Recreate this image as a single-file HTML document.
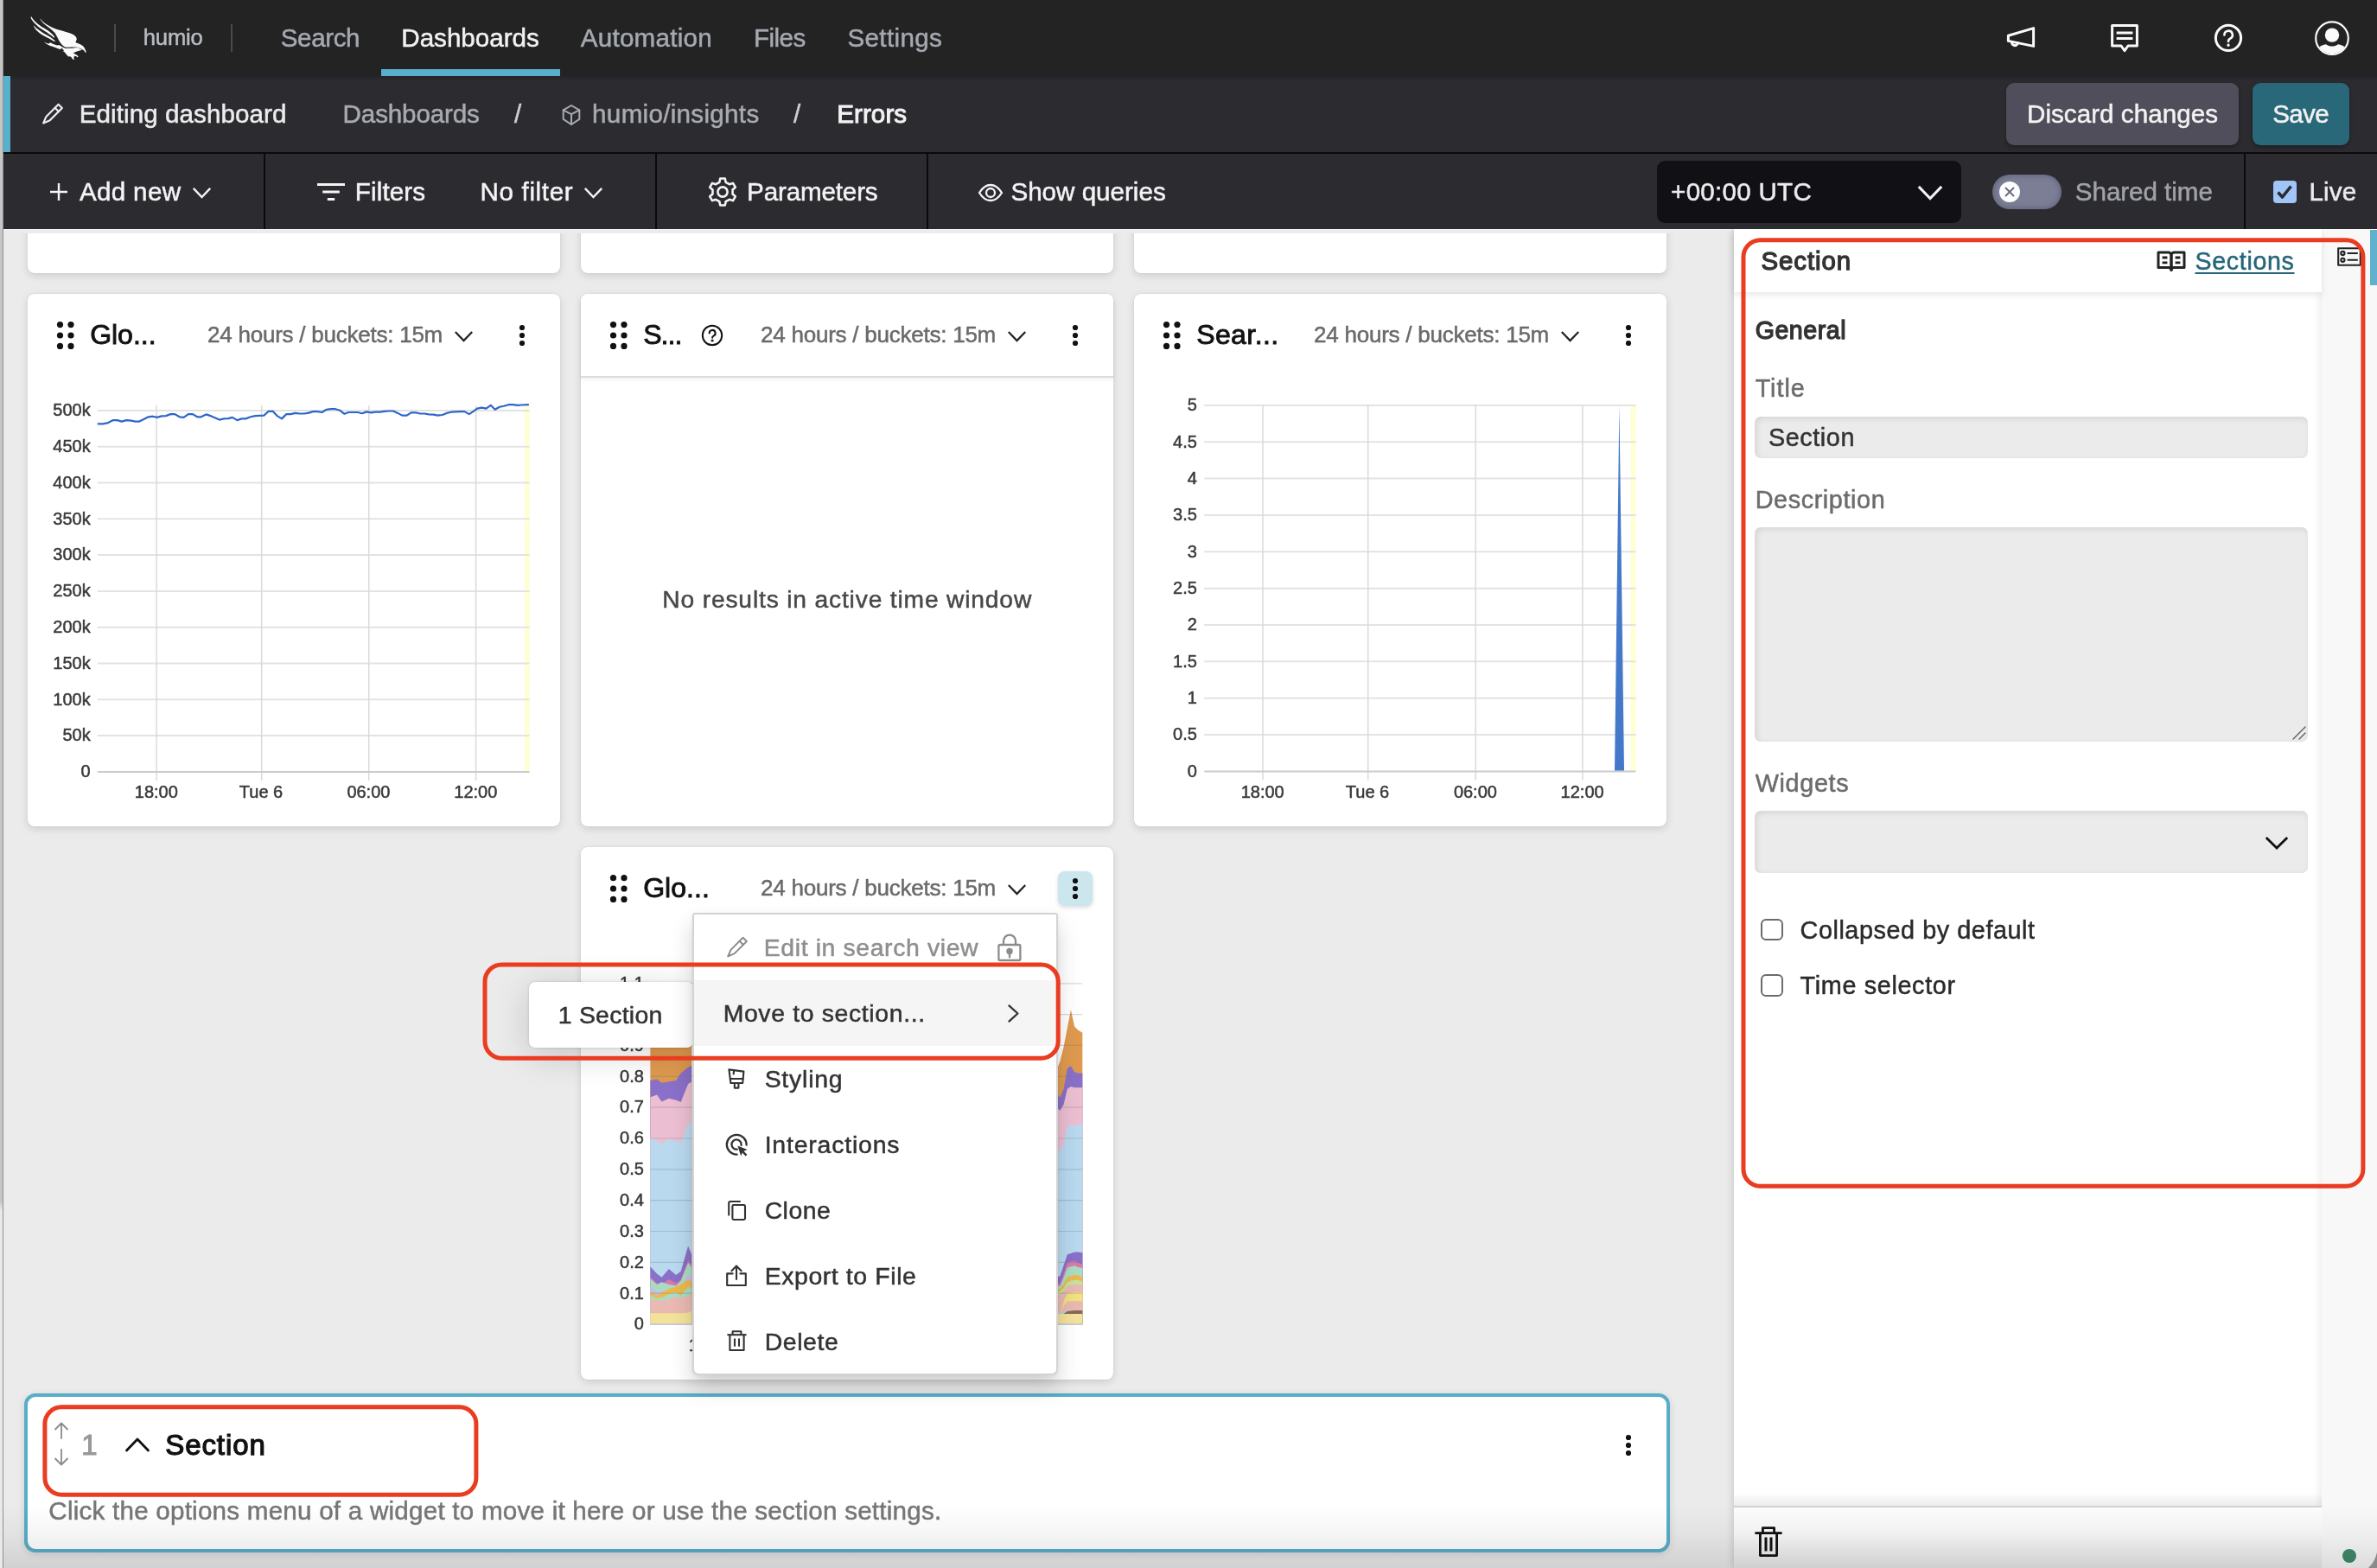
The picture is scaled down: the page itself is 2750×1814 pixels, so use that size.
<!DOCTYPE html>
<html lang="en"><head><meta charset="utf-8"><title>Errors - Editing dashboard</title>
<style>
html,body{margin:0;padding:0;background:#ebebeb;}
body{width:2750px;height:1814px;overflow:hidden;font-family:"Liberation Sans",sans-serif;}
#root{will-change:transform;position:relative;width:2750px;height:1814px;overflow:hidden;background:#ebebeb;}
.b{position:absolute;box-sizing:border-box;}
.t{position:absolute;white-space:nowrap;line-height:1;font-family:"Liberation Sans",sans-serif;}
.card{background:#fff;border-radius:8px;box-shadow:0 3px 10px rgba(0,0,0,.13),0 0 2px rgba(0,0,0,.08);}
svg{overflow:visible;}

</style></head>
<body>
<div id="root">
<div class="b " style="left:4px;top:265px;width:2746px;height:1549px;background:#ebebeb;"></div>
<div class="b card" style="left:32px;top:200px;width:616px;height:116px;"></div>
<div class="b card" style="left:672px;top:200px;width:616px;height:116px;"></div>
<div class="b card" style="left:1312px;top:200px;width:616px;height:116px;"></div>
<div class="b " style="left:4px;top:265px;width:2002px;height:5px;background:linear-gradient(#f3f3f3 0,#ebebeb 2px);"></div>
<div class="b card" style="left:32px;top:340px;width:616px;height:616px;"></div>
<svg class="b" style="left:65.4px;top:371.9px;" width="21" height="32" viewBox="0 0 21 32"><g fill="#111"><circle cx="4.5" cy="3.6" r="3.6"/><circle cx="4.5" cy="16.0" r="3.6"/><circle cx="4.5" cy="28.400000000000002" r="3.6"/><circle cx="17.0" cy="3.6" r="3.6"/><circle cx="17.0" cy="16.0" r="3.6"/><circle cx="17.0" cy="28.400000000000002" r="3.6"/></g></svg>
<span class="t" style="left:104.14px;top:371.31px;font-size:32px;color:#111;letter-spacing:-0.010px;-webkit-text-stroke:0.9px #111;">Glo...</span>
<span class="t" style="left:240.12px;top:374.29px;font-size:26px;color:#6a6a6a;letter-spacing:-0.242px;-webkit-text-stroke:0.5px #6a6a6a;">24 hours / buckets: 15m</span>
<svg class="b" style="left:525.7px;top:382.75px;" width="21" height="12.5" viewBox="0 0 21 12.5"><path d="M0.8 0.9 L10.5 11.1 L20.2 0.9" fill="none" stroke="#222" stroke-width="2.2" stroke-linecap="butt" stroke-linejoin="miter"/></svg>
<svg class="b" style="left:599.8px;top:375.1px;" width="8" height="28" viewBox="0 0 8 28"><g fill="#111"><circle cx="4" cy="4.0" r="3.1"/><circle cx="4" cy="13.0" r="3.1"/><circle cx="4" cy="22.0" r="3.1"/></g></svg>
<svg class="b" style="left:0px;top:0px;pointer-events:none;" width="2750" height="1814" viewBox="0 0 2750 1814"><rect x="606.6" y="468.9" width="6" height="424.0" fill="#ffffd6"/><line x1="112.8" x2="612.5" y1="851.1" y2="851.1" stroke="#e3e3e3" stroke-width="2"/><line x1="112.8" x2="612.5" y1="809.3" y2="809.3" stroke="#e3e3e3" stroke-width="2"/><line x1="112.8" x2="612.5" y1="767.5" y2="767.5" stroke="#e3e3e3" stroke-width="2"/><line x1="112.8" x2="612.5" y1="725.7" y2="725.7" stroke="#e3e3e3" stroke-width="2"/><line x1="112.8" x2="612.5" y1="683.9" y2="683.9" stroke="#e3e3e3" stroke-width="2"/><line x1="112.8" x2="612.5" y1="642.1" y2="642.1" stroke="#e3e3e3" stroke-width="2"/><line x1="112.8" x2="612.5" y1="600.3" y2="600.3" stroke="#e3e3e3" stroke-width="2"/><line x1="112.8" x2="612.5" y1="558.5" y2="558.5" stroke="#e3e3e3" stroke-width="2"/><line x1="112.8" x2="612.5" y1="516.7" y2="516.7" stroke="#e3e3e3" stroke-width="2"/><line x1="112.8" x2="612.5" y1="474.9" y2="474.9" stroke="#e3e3e3" stroke-width="2"/><line x1="181.1" x2="181.1" y1="468.9" y2="902.9" stroke="#dadada" stroke-width="1.5"/><line x1="302.7" x2="302.7" y1="468.9" y2="902.9" stroke="#dadada" stroke-width="1.5"/><line x1="426.7" x2="426.7" y1="468.9" y2="902.9" stroke="#dadada" stroke-width="1.5"/><line x1="550.6" x2="550.6" y1="468.9" y2="902.9" stroke="#dadada" stroke-width="1.5"/><line x1="112.8" x2="612.5" y1="892.9" y2="892.9" stroke="#cbcbcb" stroke-width="2"/><polyline points="112.8,490.3 119.3,490.3 125.1,489.1 131.0,486.1 135.5,486.1 140.8,487.6 146.3,486.1 151.6,486.7 156.7,487.6 161.1,487.6 166.4,485.0 171.7,482.3 176.7,481.7 181.7,482.9 187.0,481.4 192.0,481.1 197.3,479.1 202.3,479.1 207.6,482.3 212.6,482.9 217.9,479.1 222.9,479.1 228.2,482.3 232.6,482.3 238.5,479.4 244.4,481.4 253.8,485.6 259.1,484.4 264.1,484.1 268.8,482.9 274.4,486.1 279.7,484.4 284.2,484.4 290.0,482.3 295.3,481.1 305.4,480.6 310.7,475.8 315.7,475.8 321.0,481.4 326.0,484.4 331.3,479.1 336.3,479.1 341.6,477.9 346.6,478.5 351.9,478.5 357.2,477.6 362.2,476.1 367.5,476.1 372.5,477.0 377.8,473.8 382.8,473.2 388.1,473.2 393.1,474.7 398.4,478.8 403.4,477.0 408.7,477.0 413.7,477.0 419.0,478.2 424.0,476.4 429.3,477.3 434.3,476.7 439.6,476.7 444.6,475.8 449.9,475.5 454.9,475.5 460.2,477.9 465.3,480.6 470.6,480.6 475.6,477.3 480.9,477.3 485.9,478.5 491.2,478.5 496.2,479.4 501.5,479.7 506.5,480.6 511.8,480.0 516.8,477.9 522.1,476.7 527.1,476.4 532.4,476.1 537.4,476.1 542.7,479.1 547.7,475.8 552.1,472.6 557.4,471.7 562.4,472.6 567.7,468.8 572.7,473.8 578.0,470.8 583.0,469.7 588.3,468.2 593.3,468.2 598.6,468.8 603.7,468.5 611.9,468.2" fill="none" stroke="#2c66c8" stroke-width="2.2" stroke-linejoin="round"/></svg>
<span class="t" style="left:93.58px;top:882.23px;font-size:20px;color:#3a3a3a;-webkit-text-stroke:0.5px #3a3a3a;">0</span>
<span class="t" style="left:72.46px;top:840.43px;font-size:20px;color:#3a3a3a;-webkit-text-stroke:0.5px #3a3a3a;">50k</span>
<span class="t" style="left:61.34px;top:798.63px;font-size:20px;color:#3a3a3a;-webkit-text-stroke:0.5px #3a3a3a;">100k</span>
<span class="t" style="left:61.34px;top:756.83px;font-size:20px;color:#3a3a3a;-webkit-text-stroke:0.5px #3a3a3a;">150k</span>
<span class="t" style="left:61.34px;top:715.03px;font-size:20px;color:#3a3a3a;-webkit-text-stroke:0.5px #3a3a3a;">200k</span>
<span class="t" style="left:61.34px;top:673.23px;font-size:20px;color:#3a3a3a;-webkit-text-stroke:0.5px #3a3a3a;">250k</span>
<span class="t" style="left:61.34px;top:631.43px;font-size:20px;color:#3a3a3a;-webkit-text-stroke:0.5px #3a3a3a;">300k</span>
<span class="t" style="left:61.34px;top:589.63px;font-size:20px;color:#3a3a3a;-webkit-text-stroke:0.5px #3a3a3a;">350k</span>
<span class="t" style="left:61.34px;top:547.83px;font-size:20px;color:#3a3a3a;-webkit-text-stroke:0.5px #3a3a3a;">400k</span>
<span class="t" style="left:61.34px;top:506.03px;font-size:20px;color:#3a3a3a;-webkit-text-stroke:0.5px #3a3a3a;">450k</span>
<span class="t" style="left:61.34px;top:464.23px;font-size:20px;color:#3a3a3a;-webkit-text-stroke:0.5px #3a3a3a;">500k</span>
<span class="t" style="left:155.78px;top:906.37px;font-size:20px;color:#3a3a3a;-webkit-text-stroke:0.5px #3a3a3a;">18:00</span>
<span class="t" style="left:276.83px;top:906.37px;font-size:20px;color:#3a3a3a;-webkit-text-stroke:0.5px #3a3a3a;">Tue 6</span>
<span class="t" style="left:401.38px;top:906.37px;font-size:20px;color:#3a3a3a;-webkit-text-stroke:0.5px #3a3a3a;">06:00</span>
<span class="t" style="left:525.28px;top:906.37px;font-size:20px;color:#3a3a3a;-webkit-text-stroke:0.5px #3a3a3a;">12:00</span>
<div class="b card" style="left:672px;top:340px;width:616px;height:616px;"></div>
<div class="b " style="left:672px;top:340px;width:616px;height:97px;background:#fff;border-radius:8px 8px 0 0;border-bottom:2px solid #dcdcdc;box-shadow:0 2px 4px rgba(0,0,0,.06);"></div>
<svg class="b" style="left:705.4px;top:371.9px;" width="21" height="32" viewBox="0 0 21 32"><g fill="#111"><circle cx="4.5" cy="3.6" r="3.6"/><circle cx="4.5" cy="16.0" r="3.6"/><circle cx="4.5" cy="28.400000000000002" r="3.6"/><circle cx="17.0" cy="3.6" r="3.6"/><circle cx="17.0" cy="16.0" r="3.6"/><circle cx="17.0" cy="28.400000000000002" r="3.6"/></g></svg>
<span class="t" style="left:744.14px;top:371.31px;font-size:32px;color:#111;letter-spacing:-0.932px;-webkit-text-stroke:0.9px #111;">S...</span>
<svg class="b" style="left:811px;top:375.1px;" width="26" height="26" viewBox="0 0 26 26"><g fill="none" stroke="#111" stroke-width="2" stroke-linecap="round" stroke-linejoin="round" ><circle cx="13" cy="13" r="11.2"/><path d="M9.6 10.4 a3.5 3.5 0 1 1 4.9 3.2 c-1 .5 -1.4 1 -1.4 2.2"/><circle cx="13.1" cy="19" r="0.6" fill="#111"/></g></svg>
<span class="t" style="left:880.12px;top:374.29px;font-size:26px;color:#6a6a6a;letter-spacing:-0.242px;-webkit-text-stroke:0.5px #6a6a6a;">24 hours / buckets: 15m</span>
<svg class="b" style="left:1165.7px;top:382.75px;" width="21" height="12.5" viewBox="0 0 21 12.5"><path d="M0.8 0.9 L10.5 11.1 L20.2 0.9" fill="none" stroke="#222" stroke-width="2.2" stroke-linecap="butt" stroke-linejoin="miter"/></svg>
<svg class="b" style="left:1239.8px;top:375.1px;" width="8" height="28" viewBox="0 0 8 28"><g fill="#111"><circle cx="4" cy="4.0" r="3.1"/><circle cx="4" cy="13.0" r="3.1"/><circle cx="4" cy="22.0" r="3.1"/></g></svg>
<span class="t" style="left:766.35px;top:678.93px;font-size:28.2px;color:#484848;letter-spacing:0.834px;-webkit-text-stroke:0.5px #484848;">No results in active time window</span>
<div class="b card" style="left:1312px;top:340px;width:616px;height:616px;"></div>
<svg class="b" style="left:1345.4px;top:371.9px;" width="21" height="32" viewBox="0 0 21 32"><g fill="#111"><circle cx="4.5" cy="3.6" r="3.6"/><circle cx="4.5" cy="16.0" r="3.6"/><circle cx="4.5" cy="28.400000000000002" r="3.6"/><circle cx="17.0" cy="3.6" r="3.6"/><circle cx="17.0" cy="16.0" r="3.6"/><circle cx="17.0" cy="28.400000000000002" r="3.6"/></g></svg>
<span class="t" style="left:1384.14px;top:371.31px;font-size:32px;color:#111;letter-spacing:0.420px;-webkit-text-stroke:0.9px #111;">Sear...</span>
<span class="t" style="left:1520.12px;top:374.29px;font-size:26px;color:#6a6a6a;letter-spacing:-0.242px;-webkit-text-stroke:0.5px #6a6a6a;">24 hours / buckets: 15m</span>
<svg class="b" style="left:1805.7px;top:382.75px;" width="21" height="12.5" viewBox="0 0 21 12.5"><path d="M0.8 0.9 L10.5 11.1 L20.2 0.9" fill="none" stroke="#222" stroke-width="2.2" stroke-linecap="butt" stroke-linejoin="miter"/></svg>
<svg class="b" style="left:1879.8px;top:375.1px;" width="8" height="28" viewBox="0 0 8 28"><g fill="#111"><circle cx="4" cy="4.0" r="3.1"/><circle cx="4" cy="13.0" r="3.1"/><circle cx="4" cy="22.0" r="3.1"/></g></svg>
<svg class="b" style="left:0px;top:0px;pointer-events:none;" width="2750" height="1814" viewBox="0 0 2750 1814"><rect x="1886.6" y="468.9" width="6" height="423.5" fill="#ffffd6"/><line x1="1393.3" x2="1892.5" y1="850.05" y2="850.05" stroke="#e3e3e3" stroke-width="2"/><line x1="1393.3" x2="1892.5" y1="807.6999999999999" y2="807.6999999999999" stroke="#e3e3e3" stroke-width="2"/><line x1="1393.3" x2="1892.5" y1="765.3499999999999" y2="765.3499999999999" stroke="#e3e3e3" stroke-width="2"/><line x1="1393.3" x2="1892.5" y1="723.0" y2="723.0" stroke="#e3e3e3" stroke-width="2"/><line x1="1393.3" x2="1892.5" y1="680.65" y2="680.65" stroke="#e3e3e3" stroke-width="2"/><line x1="1393.3" x2="1892.5" y1="638.3" y2="638.3" stroke="#e3e3e3" stroke-width="2"/><line x1="1393.3" x2="1892.5" y1="595.95" y2="595.95" stroke="#e3e3e3" stroke-width="2"/><line x1="1393.3" x2="1892.5" y1="553.5999999999999" y2="553.5999999999999" stroke="#e3e3e3" stroke-width="2"/><line x1="1393.3" x2="1892.5" y1="511.24999999999994" y2="511.24999999999994" stroke="#e3e3e3" stroke-width="2"/><line x1="1393.3" x2="1892.5" y1="468.9" y2="468.9" stroke="#e3e3e3" stroke-width="2"/><line x1="1461" x2="1461" y1="468.9" y2="902.4" stroke="#dadada" stroke-width="1.5"/><line x1="1582.7" x2="1582.7" y1="468.9" y2="902.4" stroke="#dadada" stroke-width="1.5"/><line x1="1707.2" x2="1707.2" y1="468.9" y2="902.4" stroke="#dadada" stroke-width="1.5"/><line x1="1830.9" x2="1830.9" y1="468.9" y2="902.4" stroke="#dadada" stroke-width="1.5"/><line x1="1393.3" x2="1892.5" y1="892.4" y2="892.4" stroke="#cbcbcb" stroke-width="2"/><polygon points="1873.4,468.9 1879,891.4 1868,891.4" fill="#4479c9"/></svg>
<span class="t" style="left:1373.78px;top:881.73px;font-size:20px;color:#3a3a3a;-webkit-text-stroke:0.5px #3a3a3a;">0</span>
<span class="t" style="left:1357.10px;top:839.38px;font-size:20px;color:#3a3a3a;-webkit-text-stroke:0.5px #3a3a3a;">0.5</span>
<span class="t" style="left:1373.78px;top:797.03px;font-size:20px;color:#3a3a3a;-webkit-text-stroke:0.5px #3a3a3a;">1</span>
<span class="t" style="left:1357.10px;top:754.68px;font-size:20px;color:#3a3a3a;-webkit-text-stroke:0.5px #3a3a3a;">1.5</span>
<span class="t" style="left:1373.78px;top:712.33px;font-size:20px;color:#3a3a3a;-webkit-text-stroke:0.5px #3a3a3a;">2</span>
<span class="t" style="left:1357.10px;top:669.98px;font-size:20px;color:#3a3a3a;-webkit-text-stroke:0.5px #3a3a3a;">2.5</span>
<span class="t" style="left:1373.78px;top:627.63px;font-size:20px;color:#3a3a3a;-webkit-text-stroke:0.5px #3a3a3a;">3</span>
<span class="t" style="left:1357.10px;top:585.28px;font-size:20px;color:#3a3a3a;-webkit-text-stroke:0.5px #3a3a3a;">3.5</span>
<span class="t" style="left:1373.78px;top:542.93px;font-size:20px;color:#3a3a3a;-webkit-text-stroke:0.5px #3a3a3a;">4</span>
<span class="t" style="left:1357.10px;top:500.58px;font-size:20px;color:#3a3a3a;-webkit-text-stroke:0.5px #3a3a3a;">4.5</span>
<span class="t" style="left:1373.78px;top:458.23px;font-size:20px;color:#3a3a3a;-webkit-text-stroke:0.5px #3a3a3a;">5</span>
<span class="t" style="left:1435.68px;top:906.37px;font-size:20px;color:#3a3a3a;-webkit-text-stroke:0.5px #3a3a3a;">18:00</span>
<span class="t" style="left:1556.83px;top:906.37px;font-size:20px;color:#3a3a3a;-webkit-text-stroke:0.5px #3a3a3a;">Tue 6</span>
<span class="t" style="left:1681.88px;top:906.37px;font-size:20px;color:#3a3a3a;-webkit-text-stroke:0.5px #3a3a3a;">06:00</span>
<span class="t" style="left:1805.58px;top:906.37px;font-size:20px;color:#3a3a3a;-webkit-text-stroke:0.5px #3a3a3a;">12:00</span>
<div class="b card" style="left:672px;top:980px;width:616px;height:616px;"></div>
<svg class="b" style="left:705.4px;top:1011.9px;" width="21" height="32" viewBox="0 0 21 32"><g fill="#111"><circle cx="4.5" cy="3.6" r="3.6"/><circle cx="4.5" cy="16.0" r="3.6"/><circle cx="4.5" cy="28.400000000000002" r="3.6"/><circle cx="17.0" cy="3.6" r="3.6"/><circle cx="17.0" cy="16.0" r="3.6"/><circle cx="17.0" cy="28.400000000000002" r="3.6"/></g></svg>
<span class="t" style="left:744.14px;top:1011.31px;font-size:32px;color:#111;letter-spacing:0.050px;-webkit-text-stroke:0.9px #111;">Glo...</span>
<span class="t" style="left:880.12px;top:1014.29px;font-size:26px;color:#6a6a6a;letter-spacing:-0.242px;-webkit-text-stroke:0.5px #6a6a6a;">24 hours / buckets: 15m</span>
<svg class="b" style="left:1165.7px;top:1022.75px;" width="21" height="12.5" viewBox="0 0 21 12.5"><path d="M0.8 0.9 L10.5 11.1 L20.2 0.9" fill="none" stroke="#222" stroke-width="2.2" stroke-linecap="butt" stroke-linejoin="miter"/></svg>
<div class="b " style="left:1224px;top:1008px;width:40px;height:40px;background:#cbe6ed;border-radius:7.5px;box-shadow:0 2px 5px rgba(0,0,0,.14);"></div>
<svg class="b" style="left:1239.8px;top:1015.0999999999999px;" width="8" height="28" viewBox="0 0 8 28"><g fill="#111"><circle cx="4" cy="4.0" r="3.1"/><circle cx="4" cy="13.0" r="3.1"/><circle cx="4" cy="22.0" r="3.1"/></g></svg>
<svg class="b" style="left:0px;top:0px;pointer-events:none;" width="2750" height="1814" viewBox="0 0 2750 1814"><defs><clipPath id="c4"><rect x="752.2" y="1137" width="500.2" height="395.6"/></clipPath></defs><g clip-path="url(#c4)"><polygon points="752.2,1144.5 760.0,1144.5 765.5,1144.5 773.8,1144.5 782.2,1144.5 787.7,1144.5 796.1,1144.5 800.2,1144.5 800.2,1532.4 752.2,1532.4" fill="#df9a4f"/><polygon points="752.2,1250.0 760.0,1248.6 765.5,1252.8 773.8,1251.4 782.2,1250.0 787.7,1241.6 796.1,1234.7 800.2,1232.8 800.2,1532.4 752.2,1532.4" fill="#8a70c9"/><polygon points="752.2,1269.4 760.0,1266.6 765.5,1274.4 773.8,1270.8 782.2,1272.7 787.7,1275.0 796.1,1254.1 800.2,1251.4 800.2,1532.4 752.2,1532.4" fill="#ebbfd1"/><polygon points="752.2,1316.6 760.0,1319.4 765.5,1323.6 773.8,1318.0 782.2,1320.0 787.7,1322.2 796.1,1300.5 800.2,1297.2 800.2,1532.4 752.2,1532.4" fill="#b9d9ef"/><polygon points="752.2,1465.2 760.0,1473.5 765.5,1477.7 773.8,1467.9 782.2,1474.9 787.7,1470.7 796.1,1441.6 800.2,1451.3 800.2,1532.4 752.2,1532.4" fill="#8a70c9"/><polygon points="752.2,1477.7 760.0,1484.6 765.5,1486.0 773.8,1479.9 782.2,1484.6 787.7,1480.4 796.1,1458.2 800.2,1463.8 800.2,1532.4 752.2,1532.4" fill="#d87aa9"/><polygon points="752.2,1479.1 760.0,1486.0 765.5,1483.2 773.8,1486.0 782.2,1487.4 787.7,1481.8 796.1,1461.0 800.2,1466.6 800.2,1532.4 752.2,1532.4" fill="#a9dcc2"/><polygon points="752.2,1488.8 760.0,1494.3 765.5,1494.3 773.8,1491.5 782.2,1491.5 787.7,1488.8 796.1,1474.9 800.2,1477.7 800.2,1532.4 752.2,1532.4" fill="#c9b9e9"/><polygon points="752.2,1494.9 760.0,1498.5 765.5,1495.7 773.8,1491.0 782.2,1488.8 787.7,1486.0 796.1,1480.4 800.2,1483.2 800.2,1532.4 752.2,1532.4" fill="#edb94c"/><polygon points="752.2,1498.5 760.0,1502.1 765.5,1501.3 773.8,1497.1 782.2,1494.9 787.7,1498.5 796.1,1488.8 800.2,1490.2 800.2,1532.4 752.2,1532.4" fill="#a9dcc2"/><polygon points="752.2,1503.2 760.0,1504.0 765.5,1504.9 773.8,1503.2 782.2,1499.9 787.7,1502.1 796.1,1498.5 800.2,1497.7 800.2,1532.4 752.2,1532.4" fill="#eab9b1"/><polygon points="752.2,1519.3 760.0,1519.3 765.5,1519.3 773.8,1519.3 782.2,1519.3 787.7,1519.3 796.1,1518.8 800.2,1516.5 800.2,1532.4 752.2,1532.4" fill="#f4e29b"/><polygon points="1220.9,1241.6 1226.4,1227.8 1230.6,1211.1 1234.8,1188.9 1238.9,1168.3 1243.1,1187.5 1247.3,1191.7 1252.8,1195.0 1252.8,1532.4 1220.9,1532.4" fill="#df9a4f"/><polygon points="1220.9,1263.9 1226.4,1269.4 1230.6,1259.7 1234.8,1236.1 1238.9,1233.3 1243.1,1240.3 1247.3,1241.6 1252.8,1241.6 1252.8,1532.4 1220.9,1532.4" fill="#8a70c9"/><polygon points="1220.9,1280.5 1226.4,1284.7 1230.6,1277.7 1234.8,1259.7 1238.9,1256.9 1243.1,1258.3 1247.3,1258.3 1252.8,1258.3 1252.8,1532.4 1220.9,1532.4" fill="#ebbfd1"/><polygon points="1220.9,1327.7 1226.4,1331.9 1230.6,1322.2 1234.8,1304.1 1238.9,1300.5 1243.1,1303.3 1247.3,1301.3 1252.8,1300.5 1252.8,1532.4 1220.9,1532.4" fill="#b9d9ef"/><polygon points="1220.9,1477.7 1226.4,1476.3 1230.6,1463.8 1234.8,1451.3 1238.9,1449.9 1243.1,1448.5 1247.3,1448.5 1252.8,1449.3 1252.8,1532.4 1220.9,1532.4" fill="#8a70c9"/><polygon points="1220.9,1486.0 1226.4,1484.6 1230.6,1473.5 1234.8,1461.0 1238.9,1459.6 1243.1,1458.8 1247.3,1461.0 1252.8,1462.4 1252.8,1532.4 1220.9,1532.4" fill="#d87aa9"/><polygon points="1220.9,1488.8 1226.4,1487.4 1230.6,1477.7 1234.8,1466.6 1238.9,1465.2 1243.1,1464.3 1247.3,1466.0 1252.8,1467.1 1252.8,1532.4 1220.9,1532.4" fill="#a9dcc2"/><polygon points="1220.9,1491.5 1226.4,1491.0 1230.6,1486.0 1234.8,1477.7 1238.9,1476.3 1243.1,1474.9 1247.3,1475.4 1252.8,1477.7 1252.8,1532.4 1220.9,1532.4" fill="#edb94c"/><polygon points="1220.9,1494.9 1226.4,1493.8 1230.6,1490.2 1234.8,1483.2 1238.9,1481.8 1243.1,1481.0 1247.3,1481.0 1252.8,1482.7 1252.8,1532.4 1220.9,1532.4" fill="#c5e2a0"/><polygon points="1220.9,1498.5 1226.4,1497.1 1230.6,1494.3 1234.8,1487.4 1238.9,1486.5 1243.1,1486.0 1247.3,1486.0 1252.8,1486.5 1252.8,1532.4 1220.9,1532.4" fill="#eab9b1"/><polygon points="1220.9,1522.1 1226.4,1522.1 1230.6,1505.4 1234.8,1496.5 1238.9,1495.4 1243.1,1494.9 1247.3,1494.9 1252.8,1494.9 1252.8,1532.4 1220.9,1532.4" fill="#f1e17f"/><polygon points="1220.9,1522.1 1226.4,1522.1 1230.6,1511.0 1234.8,1505.4 1238.9,1505.4 1243.1,1504.9 1247.3,1504.9 1252.8,1505.4 1252.8,1532.4 1220.9,1532.4" fill="#eab9b1"/><polygon points="1220.9,1519.3 1226.4,1519.3 1230.6,1517.9 1234.8,1516.5 1238.9,1516.5 1243.1,1516.5 1247.3,1516.5 1252.8,1516.5 1252.8,1532.4 1220.9,1532.4" fill="#a8dcd0"/><polygon points="1220.9,1522.1 1226.4,1522.1 1230.6,1519.9 1234.8,1517.1 1238.9,1516.5 1243.1,1516.0 1247.3,1516.0 1252.8,1516.0 1252.8,1532.4 1220.9,1532.4" fill="#86695a"/><polygon points="1220.9,1519.9 1226.4,1519.9 1230.6,1519.9 1234.8,1519.9 1238.9,1519.9 1243.1,1519.9 1247.3,1519.9 1252.8,1519.9 1252.8,1532.4 1220.9,1532.4" fill="#f4e29b"/><line x1="752.2" x2="1252.4" y1="1532.1" y2="1532.1" stroke="rgba(120,120,120,.28)" stroke-width="1.2"/><line x1="752.2" x2="1252.4" y1="1496.2" y2="1496.2" stroke="rgba(120,120,120,.28)" stroke-width="1.2"/><line x1="752.2" x2="1252.4" y1="1460.4" y2="1460.4" stroke="rgba(120,120,120,.28)" stroke-width="1.2"/><line x1="752.2" x2="1252.4" y1="1424.5" y2="1424.5" stroke="rgba(120,120,120,.28)" stroke-width="1.2"/><line x1="752.2" x2="1252.4" y1="1388.7" y2="1388.7" stroke="rgba(120,120,120,.28)" stroke-width="1.2"/><line x1="752.2" x2="1252.4" y1="1352.8" y2="1352.8" stroke="rgba(120,120,120,.28)" stroke-width="1.2"/><line x1="752.2" x2="1252.4" y1="1317.0" y2="1317.0" stroke="rgba(120,120,120,.28)" stroke-width="1.2"/><line x1="752.2" x2="1252.4" y1="1281.1" y2="1281.1" stroke="rgba(120,120,120,.28)" stroke-width="1.2"/><line x1="752.2" x2="1252.4" y1="1245.3" y2="1245.3" stroke="rgba(120,120,120,.28)" stroke-width="1.2"/><line x1="752.2" x2="1252.4" y1="1209.4" y2="1209.4" stroke="rgba(120,120,120,.28)" stroke-width="1.2"/><line x1="752.2" x2="1252.4" y1="1173.6" y2="1173.6" stroke="rgba(120,120,120,.28)" stroke-width="1.2"/><line x1="752.2" x2="1252.4" y1="1137.8" y2="1137.8" stroke="rgba(120,120,120,.28)" stroke-width="1.2"/></g><line x1="752.2" x2="1252.4" y1="1532.1" y2="1532.1" stroke="#cbcbcb" stroke-width="2"/></svg>
<span class="t" style="left:796.78px;top:1546.07px;font-size:20px;color:#3a3a3a;-webkit-text-stroke:0.5px #3a3a3a;">18:00</span>
<span class="t" style="left:917.83px;top:1546.07px;font-size:20px;color:#3a3a3a;-webkit-text-stroke:0.5px #3a3a3a;">Tue 6</span>
<span class="t" style="left:1042.38px;top:1546.07px;font-size:20px;color:#3a3a3a;-webkit-text-stroke:0.5px #3a3a3a;">06:00</span>
<span class="t" style="left:1166.28px;top:1546.07px;font-size:20px;color:#3a3a3a;-webkit-text-stroke:0.5px #3a3a3a;">12:00</span>
<span class="t" style="left:733.78px;top:1521.43px;font-size:20px;color:#3a3a3a;-webkit-text-stroke:0.5px #3a3a3a;">0</span>
<span class="t" style="left:717.10px;top:1485.58px;font-size:20px;color:#3a3a3a;-webkit-text-stroke:0.5px #3a3a3a;">0.1</span>
<span class="t" style="left:717.10px;top:1449.73px;font-size:20px;color:#3a3a3a;-webkit-text-stroke:0.5px #3a3a3a;">0.2</span>
<span class="t" style="left:717.10px;top:1413.88px;font-size:20px;color:#3a3a3a;-webkit-text-stroke:0.5px #3a3a3a;">0.3</span>
<span class="t" style="left:717.10px;top:1378.03px;font-size:20px;color:#3a3a3a;-webkit-text-stroke:0.5px #3a3a3a;">0.4</span>
<span class="t" style="left:717.10px;top:1342.18px;font-size:20px;color:#3a3a3a;-webkit-text-stroke:0.5px #3a3a3a;">0.5</span>
<span class="t" style="left:717.10px;top:1306.33px;font-size:20px;color:#3a3a3a;-webkit-text-stroke:0.5px #3a3a3a;">0.6</span>
<span class="t" style="left:717.10px;top:1270.48px;font-size:20px;color:#3a3a3a;-webkit-text-stroke:0.5px #3a3a3a;">0.7</span>
<span class="t" style="left:717.10px;top:1234.63px;font-size:20px;color:#3a3a3a;-webkit-text-stroke:0.5px #3a3a3a;">0.8</span>
<span class="t" style="left:717.10px;top:1198.78px;font-size:20px;color:#3a3a3a;-webkit-text-stroke:0.5px #3a3a3a;">0.9</span>
<span class="t" style="left:733.78px;top:1162.93px;font-size:20px;color:#3a3a3a;-webkit-text-stroke:0.5px #3a3a3a;">1</span>
<span class="t" style="left:717.10px;top:1127.08px;font-size:20px;color:#3a3a3a;-webkit-text-stroke:0.5px #3a3a3a;">1.1</span>
<div class="b " style="left:28px;top:1612px;width:1904px;height:184px;background:#fff;border:4px solid #58adc8;border-radius:13px;box-shadow:0 2px 8px rgba(0,0,0,.12);"></div>
<svg class="b" style="left:62px;top:1645px;" width="18" height="20" viewBox="0 0 18 20"><g fill="none" stroke="#8a8a8a" stroke-width="1.8" stroke-linecap="round" stroke-linejoin="round" ><path d="M9 19 V2 M2 8.5 L9 1.5 L16 8.5"/></g></svg>
<svg class="b" style="left:62px;top:1676px;" width="18" height="20" viewBox="0 0 18 20"><g fill="none" stroke="#8a8a8a" stroke-width="1.8" stroke-linecap="round" stroke-linejoin="round" ><path d="M9 1 V18 M2 11.5 L9 18.5 L16 11.5"/></g></svg>
<span class="t" style="left:94.20px;top:1654.67px;font-size:33px;color:#999;-webkit-text-stroke:1.1px #999;">1</span>
<svg class="b" style="left:145px;top:1663px;" width="28" height="17" viewBox="0 0 28 17"><g fill="none" stroke="#111" stroke-width="2.8" stroke-linecap="round" stroke-linejoin="round" ><path d="M1.5 15 L14 2 L26.5 15"/></g></svg>
<span class="t" style="left:191.31px;top:1655.07px;font-size:33.0px;color:#111;letter-spacing:0.900px;-webkit-text-stroke:1.25px #111;">Section</span>
<span class="t" style="left:56.31px;top:1733.14px;font-size:29.6px;color:#777;letter-spacing:0.230px;-webkit-text-stroke:0.5px #777;">Click the options menu of a widget to move it here or use the section settings.</span>
<svg class="b" style="left:1880px;top:1658.6px;" width="8" height="28" viewBox="0 0 8 28"><g fill="#111"><circle cx="4" cy="4.0" r="3.1"/><circle cx="4" cy="13.0" r="3.1"/><circle cx="4" cy="22.0" r="3.1"/></g></svg>
<div class="b " style="left:612px;top:1135.5px;width:190px;height:76.5px;background:#fff;border-radius:7px;box-shadow:0 8px 40px rgba(0,0,0,.17),0 0 3px rgba(0,0,0,.18);"></div>
<span class="t" style="left:645.65px;top:1159.76px;font-size:28.4px;color:#333;letter-spacing:0.279px;-webkit-text-stroke:0.5px #333;">1 Section</span>
<div class="b " style="left:801px;top:1056px;width:423px;height:534.5px;background:#fff;border-radius:3px 3px 7px 7px;border:2px solid #d3d3d3;box-shadow:0 14px 26px rgba(0,0,0,.17),0 2px 5px rgba(0,0,0,.06);"></div>
<div class="b " style="left:803px;top:1134px;width:419px;height:76px;background:#f5f5f5;"></div>
<span class="t" style="left:883.75px;top:1081.66px;font-size:28.4px;color:#8f8f8f;letter-spacing:0.617px;-webkit-text-stroke:0.5px #8f8f8f;">Edit in search view</span>
<span class="t" style="left:836.65px;top:1157.96px;font-size:28.4px;color:#333;letter-spacing:0.647px;-webkit-text-stroke:0.5px #333;">Move to section...</span>
<span class="t" style="left:884.65px;top:1233.96px;font-size:28.4px;color:#333;letter-spacing:0.798px;-webkit-text-stroke:0.5px #333;">Styling</span>
<span class="t" style="left:884.65px;top:1309.96px;font-size:28.4px;color:#333;letter-spacing:0.822px;-webkit-text-stroke:0.5px #333;">Interactions</span>
<span class="t" style="left:884.65px;top:1385.96px;font-size:28.4px;color:#333;letter-spacing:0.479px;-webkit-text-stroke:0.5px #333;">Clone</span>
<span class="t" style="left:884.65px;top:1461.96px;font-size:28.4px;color:#333;letter-spacing:0.611px;-webkit-text-stroke:0.5px #333;">Export to File</span>
<span class="t" style="left:884.65px;top:1537.96px;font-size:28.4px;color:#333;letter-spacing:0.625px;-webkit-text-stroke:0.5px #333;">Delete</span>
<svg class="b" style="left:840px;top:1083px;" width="26" height="26" viewBox="0 0 26 26"><g fill="none" stroke="#8c8c8c" stroke-width="2" stroke-linecap="round" stroke-linejoin="round" ><path d="M2.2 23.4 L5.45 15.91 L19.6 1.76 L23.84 6 L9.69 20.15 Z"/><path d="M15.64 5.72 L19.88 9.96"/></g></svg>
<svg class="b" style="left:1153px;top:1079.5px;" width="30" height="33" viewBox="0 0 30 33"><g fill="none" stroke="#8c8c8c" stroke-width="2.3" stroke-linecap="round" stroke-linejoin="round" ><rect x="2.4" y="13" width="25" height="18" rx="1.6"/><path d="M8 13 V8.6 a7 7 0 0 1 14 0 V13"/><circle cx="15" cy="20.6" r="2.6" fill="#8c8c8c"/><path d="M15 22 V27.4"/></g></svg>
<svg class="b" style="left:1166px;top:1162px;" width="13" height="21" viewBox="0 0 13 21"><g fill="none" stroke="#333" stroke-width="2.3" stroke-linecap="round" stroke-linejoin="round" ><path d="M1.4 1.4 L11.4 10.5 L1.4 19.6"/></g></svg>
<svg class="b" style="left:841px;top:1235.6px;" width="22" height="25" viewBox="0 0 22 25"><g fill="none" stroke="#333" stroke-width="2.1" stroke-linecap="round" stroke-linejoin="round" ><path d="M2.4 1.4 L19.4 3.6 L18.2 17 H4.4 Z"/><path d="M4 12 H18.6"/><path d="M8.8 17 V22.6 H13.4 V17"/><path d="M8.2 2.4 L7.6 6.4"/></g></svg>
<svg class="b" style="left:839px;top:1311px;" width="28" height="28" viewBox="0 0 28 28"><g fill="none" stroke="#333" stroke-width="2.3" stroke-linecap="round" stroke-linejoin="round" ><path d="M13.6 24.6 A11.4 11.4 0 1 1 24.6 13.6"/><path d="M13.8 18.6 A5.6 5.6 0 1 1 18.6 13.8"/></g></svg>
<svg class="b" style="left:839px;top:1311px;" width="28" height="28" viewBox="0 0 28 28"><path d="M14.4 14.4 L25.6 19 L21.4 20.8 L25.4 24.8 L23.6 26.4 L19.8 22.4 L18.2 26.4 Z" fill="#333"/></svg>
<svg class="b" style="left:841px;top:1388px;" width="23" height="25" viewBox="0 0 23 25"><g fill="none" stroke="#333" stroke-width="2.1" stroke-linecap="round" stroke-linejoin="round" ><rect x="6.4" y="6" width="14.6" height="17" rx="1.4"/><path d="M2.2 17.6 V3.6 a1.6 1.6 0 0 1 1.6 -1.6 H15"/></g></svg>
<svg class="b" style="left:839px;top:1462.5px;" width="26" height="26" viewBox="0 0 26 26"><g fill="none" stroke="#333" stroke-width="2.1" stroke-linecap="round" stroke-linejoin="round" ><path d="M8.6 10.4 H2.2 V24 H23.8 V10.4 H17.4"/><path d="M13 17 V2 M7.4 7.2 L13 1.6 L18.6 7.2"/></g></svg>
<svg class="b" style="left:839.5px;top:1538.4px;" width="25" height="26" viewBox="0 0 25 26"><g fill="none" stroke="#333" stroke-width="2.1" stroke-linejoin="round" stroke-linecap="butt"><path d="M1.4 6.2 H23.6"/><path d="M7.6 6 V2.2 H17.4 V6"/><path d="M4.4 6.4 V24 H20.6 V6.4"/><path d="M10 10.6 V19.8 M15 10.6 V19.8"/></g></svg>
<div class="b " style="left:2006px;top:265px;width:680px;height:1549px;background:#fff;box-shadow:-1px 0 9px rgba(0,0,0,.16);"></div>
<div class="b " style="left:2686px;top:265px;width:64px;height:1549px;background:#f8f8f8;box-shadow:-3px 0 7px rgba(0,0,0,.07);"></div>
<div class="b " style="left:2742px;top:266px;width:8px;height:64px;background:#5fb1cd;"></div>
<div class="b " style="left:2006px;top:265px;width:680px;height:73px;background:#fff;box-shadow:0 3px 8px rgba(0,0,0,.10);"></div>
<span class="t" style="left:2037.42px;top:287.11px;font-size:29.4px;color:#333;letter-spacing:0.955px;-webkit-text-stroke:1.3px #333;">Section</span>
<span class="t" style="left:2539.54px;top:287.99px;font-size:28.6px;color:#27667a;letter-spacing:0.663px;-webkit-text-stroke:0.5px #27667a;text-decoration:underline;text-decoration-thickness:2px;text-underline-offset:3px;">Sections</span>
<svg class="b" style="left:2495px;top:289.5px;" width="34" height="26" viewBox="0 0 34 26"><g fill="none" stroke="#222" stroke-width="3" stroke-linejoin="round" stroke-linecap="butt"><path d="M2 2 H13.6 a3.4 3.4 0 0 1 3.4 3.4 V22.6 a3 3 0 0 0 -3 -3 H2 Z"/><path d="M32 2 H20.4 a3.4 3.4 0 0 0 -3.4 3.4 V22.6 a3 3 0 0 1 3 -3 H32 Z"/><path d="M6.6 8 H12.4 M6.6 13.8 H12.4 M21.6 8 H27.4 M21.6 13.8 H27.4" stroke-width="2.8"/></g></svg>
<svg class="b" style="left:2704px;top:286.4px;" width="28" height="22" viewBox="0 0 28 22"><g fill="none" stroke="#222" stroke-width="2.1" stroke-linejoin="round" stroke-linecap="butt"><rect x="1.2" y="1.2" width="25.6" height="19.6"/><circle cx="6.4" cy="7" r="2.1"/><circle cx="6.4" cy="14.8" r="2.1"/><path d="M11.6 7 H23.8 M11.6 14.8 H23.8"/></g></svg>
<span class="t" style="left:2030.64px;top:368.19px;font-size:28.6px;color:#333;letter-spacing:0.547px;-webkit-text-stroke:1.3px #333;">General</span>
<span class="t" style="left:2030.64px;top:435.42px;font-size:28.8px;color:#6c6c6c;letter-spacing:0.946px;-webkit-text-stroke:0.5px #6c6c6c;">Title</span>
<div class="b " style="left:2030px;top:482px;width:640px;height:47.5px;background:#ebebeb;border-radius:7px;box-shadow:inset 2px 2px 7px rgba(0,0,0,.10);"></div>
<span class="t" style="left:2045.94px;top:492.02px;font-size:28.8px;color:#333;letter-spacing:0.578px;-webkit-text-stroke:0.5px #333;">Section</span>
<span class="t" style="left:2030.64px;top:563.82px;font-size:28.8px;color:#6c6c6c;letter-spacing:0.608px;-webkit-text-stroke:0.5px #6c6c6c;">Description</span>
<div class="b " style="left:2030px;top:610px;width:640px;height:247.5px;background:#ebebeb;border-radius:7px;box-shadow:inset 2px 2px 7px rgba(0,0,0,.10);"></div>
<svg class="b" style="left:2652px;top:840px;" width="16" height="16" viewBox="0 0 16 16"><g fill="none" stroke="#555" stroke-width="1.2" stroke-linecap="round" stroke-linejoin="round" ><path d="M1 15 L15 1 M8 15 L15 8"/></g></svg>
<span class="t" style="left:2030.64px;top:891.82px;font-size:28.8px;color:#6c6c6c;letter-spacing:0.666px;-webkit-text-stroke:0.5px #6c6c6c;">Widgets</span>
<div class="b " style="left:2030px;top:938px;width:640px;height:72px;background:#ebebeb;border-radius:7px;box-shadow:inset 2px 2px 7px rgba(0,0,0,.10);"></div>
<svg class="b" style="left:2621.4px;top:968.15px;" width="26" height="14.5" viewBox="0 0 26 14.5"><path d="M0.8 0.9 L13.0 13.1 L25.2 0.9" fill="none" stroke="#111" stroke-width="2.8" stroke-linecap="butt" stroke-linejoin="miter"/></svg>
<div class="b " style="left:2037.3px;top:1063.2px;width:25.6px;height:25.2px;background:#fff;border:2px solid #6b6b6b;border-radius:6px;"></div>
<span class="t" style="left:2082.54px;top:1061.82px;font-size:28.8px;color:#2b2b2b;letter-spacing:0.557px;-webkit-text-stroke:0.5px #2b2b2b;">Collapsed by default</span>
<div class="b " style="left:2037.3px;top:1127.4px;width:25.6px;height:25.2px;background:#fff;border:2px solid #6b6b6b;border-radius:6px;"></div>
<span class="t" style="left:2082.54px;top:1126.02px;font-size:28.8px;color:#2b2b2b;letter-spacing:0.647px;-webkit-text-stroke:0.5px #2b2b2b;">Time selector</span>
<div class="b " style="left:2006px;top:1727px;width:680px;height:15px;background:linear-gradient(rgba(0,0,0,0),rgba(0,0,0,.075));"></div>
<div class="b " style="left:2006px;top:1742px;width:680px;height:72px;background:linear-gradient(#fdfdfd 0%,#fafafa 40%,#e9e9e9 100%);border-top:2px solid #d2d2d2;"></div>
<svg class="b" style="left:2029px;top:1765px;" width="34" height="37" viewBox="0 0 34 37"><g fill="none" stroke="#111" stroke-width="2.8" stroke-linejoin="round" stroke-linecap="butt"><path d="M1.4 8.6 H32.6"/><path d="M10.4 8.4 V2.6 H23.6 V8.4"/><path d="M7.4 8.8 V34.6 H26.6 V8.8"/><path d="M14 13.6 V29.6 M20 13.6 V29.6" stroke-width="3"/></g></svg>
<div class="b " style="left:2710px;top:1791.6px;width:16px;height:16px;background:#3f8b6c;border-radius:8px;"></div>
<div class="b " style="left:4px;top:1740px;width:2746px;height:74px;background:linear-gradient(rgba(0,0,0,0) 0%,rgba(0,0,0,.035) 45%,rgba(0,0,0,.11) 100%);"></div>
<svg class="b" style="left:2738px;top:1796px;" width="12" height="18" viewBox="0 0 12 18"><path d="M12 0 C10 8 7 13 2 18 H12 Z" fill="#8a8a8a"/></svg>
<svg class="b" style="left:0px;top:0px;pointer-events:none;" width="2750" height="1814" viewBox="0 0 2750 1814"><rect x="2017.0" y="277.8" width="716.9" height="1094.4" rx="19.5" ry="19.5" fill="none" stroke="#e93c20" stroke-width="5"/></svg>
<svg class="b" style="left:0px;top:0px;pointer-events:none;" width="2750" height="1814" viewBox="0 0 2750 1814"><rect x="561.0" y="1115.9" width="663.2" height="108.3" rx="19.5" ry="19.5" fill="none" stroke="#e93c20" stroke-width="5"/></svg>
<svg class="b" style="left:0px;top:0px;pointer-events:none;" width="2750" height="1814" viewBox="0 0 2750 1814"><rect x="51.9" y="1627.7" width="499.0" height="101.5" rx="19.5" ry="19.5" fill="none" stroke="#e93c20" stroke-width="5"/></svg>
<div class="b " style="left:4px;top:0px;width:2746px;height:88px;background:#232323;"></div>
<svg class="b" style="left:25px;top:10px;" width="90" height="68" viewBox="0 0 2075 1568"><g fill="#fafafa"><path d="M490 260 C560 360 700 450 850 520 C1000 575 1150 610 1300 660 C1400 700 1460 740 1470 800 C1472 850 1430 880 1445 905 C1500 930 1600 950 1655 1015 C1690 1070 1715 1120 1722 1160 C1715 1180 1695 1180 1685 1150 C1660 1100 1600 1075 1500 1040 C1450 1018 1300 1035 1180 1030 C1110 1010 1060 960 1020 890 C985 830 940 730 890 650 C830 580 700 490 590 400 C540 350 500 300 490 260 Z"/><path d="M255 205 C320 320 450 430 600 520 C750 610 840 690 882 758 L858 776 C795 712 670 632 520 538 C380 435 280 325 243 240 Z"/><path d="M318 445 C400 540 520 620 680 710 C800 780 870 830 896 866 L878 884 C815 842 690 772 545 697 C405 608 335 515 318 445 Z"/><path d="M590 880 C640 900 700 940 730 930 L770 905 C800 930 880 960 950 978 L1000 968 C1060 1010 1120 1050 1200 1062 C1300 1060 1400 1052 1480 1040 C1530 1055 1580 1080 1610 1100 C1540 1120 1440 1150 1375 1185 C1430 1205 1490 1240 1515 1272 L1490 1305 C1470 1275 1450 1255 1420 1262 C1390 1280 1385 1320 1405 1362 L1370 1352 C1340 1320 1325 1290 1310 1278 L1240 1272 C1200 1230 1160 1180 1130 1150 L1090 1132 L1135 1122 C1110 1090 1085 1065 1062 1052 L1032 1092 C1000 1075 900 1035 820 1010 C740 985 660 945 590 880 Z"/></g></svg>
<div class="b " style="left:132px;top:28px;width:2px;height:32px;background:#4a4a4c;"></div>
<div class="b " style="left:267px;top:28px;width:2px;height:32px;background:#4a4a4c;"></div>
<span class="t" style="left:165.83px;top:30.63px;font-size:25.6px;color:#b7bcc2;letter-spacing:-0.196px;-webkit-text-stroke:0.5px #b7bcc2;">humio</span>
<span class="t" style="left:324.71px;top:28.74px;font-size:29.6px;color:#a4a9b0;letter-spacing:-0.381px;-webkit-text-stroke:0.5px #a4a9b0;">Search</span>
<span class="t" style="left:464.31px;top:28.74px;font-size:29.6px;color:#f2f2f2;letter-spacing:-0.011px;-webkit-text-stroke:0.5px #f2f2f2;">Dashboards</span>
<span class="t" style="left:671.71px;top:28.74px;font-size:29.6px;color:#a4a9b0;letter-spacing:0.253px;-webkit-text-stroke:0.5px #a4a9b0;">Automation</span>
<span class="t" style="left:871.91px;top:28.74px;font-size:29.6px;color:#a4a9b0;letter-spacing:-0.552px;-webkit-text-stroke:0.5px #a4a9b0;">Files</span>
<span class="t" style="left:980.41px;top:28.74px;font-size:29.6px;color:#a4a9b0;letter-spacing:0.363px;-webkit-text-stroke:0.5px #a4a9b0;">Settings</span>
<div class="b " style="left:441px;top:80px;width:207px;height:8px;background:#58b1cc;"></div>
<svg class="b" style="left:2320px;top:28px;" width="36" height="30" viewBox="0 0 36 30"><g fill="none" stroke="#fafafa" stroke-width="3" stroke-linecap="round" stroke-linejoin="round" ><path d="M3.4 13.2 L32.6 4.6 V25.4 L3.4 19.4 Z"/><path d="M7.6 20.6 a3.4 3.4 0 0 0 6.8 1.2"/></g></svg>
<svg class="b" style="left:2440px;top:26px;" width="36" height="36" viewBox="0 0 36 36"><g fill="none" stroke="#fafafa" stroke-width="3" stroke-linejoin="round" stroke-linecap="butt"><path d="M3.6 3.6 H32.4 V27 H22 L18 32.6 L14 27 H3.6 Z"/><path d="M8.6 12 H27.4 M8.6 18.6 H27.4"/></g></svg>
<svg class="b" style="left:2560px;top:26px;" width="36" height="36" viewBox="0 0 36 36"><g fill="none" stroke="#fafafa" stroke-width="3" stroke-linecap="round" stroke-linejoin="round" ><circle cx="18" cy="17.9" r="14.6"/><path d="M13.4 14.4 a4.7 4.7 0 1 1 6.8 4.2 c-1.6 .8 -2.2 1.6 -2.2 3.4" stroke-width="2.6"/><circle cx="18" cy="26.2" r="1" fill="#fafafa" stroke-width="1.4"/></g></svg>
<svg class="b" style="left:2676px;top:22px;" width="44" height="44" viewBox="0 0 44 44"><defs><clipPath id="uc"><circle cx="22" cy="22.2" r="18"/></clipPath></defs><circle cx="22" cy="22.2" r="18.8" fill="none" stroke="#fafafa" stroke-width="2.2"/><circle cx="22" cy="18.6" r="8.2" fill="#fafafa"/><path clip-path="url(#uc)" d="M3 44 V36 C7 31.5 12 29.5 15 29.2 C19 32.4 25 32.4 29 29.2 C32 29.5 37 31.5 41 36 V44 Z" fill="#fafafa"/></svg>
<div class="b " style="left:4px;top:88px;width:2746px;height:89px;background:#2c2b30;"></div>
<div class="b " style="left:4px;top:88px;width:2746px;height:6px;background:linear-gradient(#252428,rgba(44,43,48,0));"></div>
<div class="b " style="left:4px;top:88px;width:8px;height:88px;background:#58b1cc;"></div>
<svg class="b" style="left:48px;top:119px;" width="26" height="26" viewBox="0 0 26 26"><g fill="none" stroke="#ececec" stroke-width="2.2" stroke-linecap="round" stroke-linejoin="round" ><path d="M2.2 23.4 L5.45 15.91 L19.6 1.76 L23.84 6 L9.69 20.15 Z"/><path d="M15.64 5.72 L19.88 9.96"/></g></svg>
<svg class="b" style="left:649px;top:119.5px;" width="24" height="26" viewBox="0 0 24 26"><g fill="none" stroke="#a7abb1" stroke-width="2" stroke-linecap="round" stroke-linejoin="round" ><path d="M12 2 L21.3 7.3 V17.9 L12 24 L2.7 17.9 V7.3 Z"/><path d="M2.7 7.3 L12 12.2 L21.3 7.3 M12 12.2 V24"/></g></svg>
<span class="t" style="left:91.71px;top:117.04px;font-size:29.6px;color:#ececec;letter-spacing:0.075px;-webkit-text-stroke:0.5px #ececec;">Editing dashboard</span>
<span class="t" style="left:396.61px;top:117.04px;font-size:29.6px;color:#a7abb1;letter-spacing:-0.145px;-webkit-text-stroke:0.5px #a7abb1;">Dashboards</span>
<span class="t" style="left:595.11px;top:117.04px;font-size:29.6px;color:#d0d0d0;letter-spacing:2.542px;-webkit-text-stroke:0.5px #d0d0d0;">/</span>
<span class="t" style="left:685.11px;top:117.04px;font-size:29.6px;color:#a7abb1;letter-spacing:0.300px;-webkit-text-stroke:0.5px #a7abb1;">humio/insights</span>
<span class="t" style="left:918.11px;top:117.04px;font-size:29.6px;color:#d0d0d0;letter-spacing:2.342px;-webkit-text-stroke:0.5px #d0d0d0;">/</span>
<span class="t" style="left:968.31px;top:117.04px;font-size:29.6px;color:#f2f2f2;letter-spacing:0.043px;-webkit-text-stroke:1.0px #f2f2f2;">Errors</span>
<div class="b " style="left:2321px;top:96px;width:269px;height:72px;background:#4f4e5a;border-radius:9px;box-shadow:0 2px 4px rgba(0,0,0,.35);"></div>
<span class="t" style="left:2345.01px;top:117.24px;font-size:29.6px;color:#f2f2f2;letter-spacing:0.040px;-webkit-text-stroke:0.5px #f2f2f2;">Discard changes</span>
<div class="b " style="left:2606px;top:96px;width:112px;height:72px;background:#296878;border-radius:9px;box-shadow:0 2px 4px rgba(0,0,0,.35);"></div>
<span class="t" style="left:2629.31px;top:117.24px;font-size:29.6px;color:#f2f2f2;letter-spacing:-0.692px;-webkit-text-stroke:0.5px #f2f2f2;">Save</span>
<div class="b " style="left:4px;top:176px;width:2746px;height:2px;background:#0a0a0c;"></div>
<div class="b " style="left:4px;top:178px;width:2746px;height:87px;background:#2c2b30;"></div>
<div class="b " style="left:305px;top:178px;width:2px;height:87px;background:#0a0a0c;"></div>
<div class="b " style="left:758px;top:178px;width:2px;height:87px;background:#0a0a0c;"></div>
<div class="b " style="left:1072px;top:178px;width:2px;height:87px;background:#0a0a0c;"></div>
<div class="b " style="left:2596px;top:178px;width:2px;height:87px;background:#0a0a0c;"></div>
<svg class="b" style="left:58px;top:212.2px;" width="20" height="20" viewBox="0 0 20 20"><g fill="none" stroke="#f4f4f4" stroke-width="2.4" stroke-linejoin="round" stroke-linecap="butt"><path d="M10 0 V20 M0 10 H20"/></g></svg>
<svg class="b" style="left:222.7px;top:216.75px;" width="21" height="12.5" viewBox="0 0 21 12.5"><path d="M0.8 0.9 L10.5 11.1 L20.2 0.9" fill="none" stroke="#f4f4f4" stroke-width="2.4" stroke-linecap="butt" stroke-linejoin="miter"/></svg>
<svg class="b" style="left:366px;top:211px;" width="34" height="22" viewBox="0 0 34 22"><g fill="none" stroke="#f4f4f4" stroke-width="3" stroke-linejoin="round" stroke-linecap="butt"><path d="M1 2.6 H33 M7.2 11 H26.8 M12.8 19.4 H21.2"/></g></svg>
<svg class="b" style="left:675.5px;top:216.75px;" width="21" height="12.5" viewBox="0 0 21 12.5"><path d="M0.8 0.9 L10.5 11.1 L20.2 0.9" fill="none" stroke="#f4f4f4" stroke-width="2.4" stroke-linecap="butt" stroke-linejoin="miter"/></svg>
<svg class="b" style="left:819px;top:205px;" width="34" height="34" viewBox="0 0 34 34"><g fill="none" stroke="#f4f4f4" stroke-width="2.6" stroke-linecap="round" stroke-linejoin="round" ><path d="M13.35 5.78 L14.22 1.55 L19.78 1.55 L20.65 5.78 L24.90 8.23 L28.99 6.87 L31.77 11.68 L28.54 14.55 L28.54 19.45 L31.77 22.32 L28.99 27.13 L24.90 25.77 L20.65 28.22 L19.78 32.45 L14.22 32.45 L13.35 28.22 L9.10 25.77 L5.01 27.13 L2.23 22.32 L5.46 19.45 L5.46 14.55 L2.23 11.68 L5.01 6.87 L9.10 8.23 Z"/><circle cx="17.0" cy="17.0" r="5.61"/></g></svg>
<svg class="b" style="left:1131px;top:211.5px;" width="30" height="22" viewBox="0 0 30 22"><g fill="none" stroke="#f4f4f4" stroke-width="2.3" stroke-linecap="round" stroke-linejoin="round" ><path d="M2 11 C6.4 4 11 2 15 2 C19 2 23.6 4 28 11 C23.6 18 19 20 15 20 C11 20 6.4 18 2 11 Z"/><circle cx="15" cy="11" r="5"/></g></svg>
<span class="t" style="left:91.91px;top:206.74px;font-size:29.6px;color:#f4f4f4;letter-spacing:0.334px;-webkit-text-stroke:0.5px #f4f4f4;">Add new</span>
<span class="t" style="left:410.81px;top:206.74px;font-size:29.6px;color:#f4f4f4;letter-spacing:0.119px;-webkit-text-stroke:0.5px #f4f4f4;">Filters</span>
<span class="t" style="left:555.61px;top:206.74px;font-size:29.6px;color:#f4f4f4;letter-spacing:0.626px;-webkit-text-stroke:0.5px #f4f4f4;">No filter</span>
<span class="t" style="left:864.11px;top:206.74px;font-size:29.6px;color:#f4f4f4;letter-spacing:-0.155px;-webkit-text-stroke:0.5px #f4f4f4;">Parameters</span>
<span class="t" style="left:1169.41px;top:206.74px;font-size:29.6px;color:#f4f4f4;letter-spacing:-0.003px;-webkit-text-stroke:0.5px #f4f4f4;">Show queries</span>
<div class="b " style="left:1917px;top:186px;width:352px;height:72px;background:#111015;border-radius:9px;"></div>
<span class="t" style="left:1933.11px;top:206.94px;font-size:29.6px;color:#ececec;letter-spacing:0.254px;-webkit-text-stroke:0.5px #ececec;">+00:00 UTC</span>
<svg class="b" style="left:2219.0px;top:214.6px;" width="28" height="16" viewBox="0 0 28 16"><path d="M0.8 0.9 L14.0 14.6 L27.2 0.9" fill="none" stroke="#f4f4f4" stroke-width="3" stroke-linecap="butt" stroke-linejoin="miter"/></svg>
<div class="b " style="left:2305px;top:202px;width:80px;height:40px;background:#7c7e96;border-radius:20px;box-shadow:inset 0 0 7px rgba(20,20,40,.35);"></div>
<div class="b " style="left:2313px;top:210px;width:24px;height:24px;background:#fdfdfd;border-radius:12px;"></div>
<svg class="b" style="left:2319px;top:216px;" width="12" height="12" viewBox="0 0 12 12"><g fill="none" stroke="#6a6c84" stroke-width="2" stroke-linecap="round" stroke-linejoin="round" ><path d="M1.5 1.5 L10.5 10.5 M10.5 1.5 L1.5 10.5"/></g></svg>
<span class="t" style="left:2400.81px;top:206.74px;font-size:29.6px;color:#9fa3a9;letter-spacing:-0.049px;-webkit-text-stroke:0.5px #9fa3a9;">Shared time</span>
<div class="b " style="left:2629.5px;top:209px;width:27px;height:26px;background:#a1c5f8;border-radius:4px;"></div>
<svg class="b" style="left:2632px;top:212px;" width="22" height="20" viewBox="0 0 22 20"><g fill="none" stroke="#2c2b30" stroke-width="3.6" stroke-linejoin="round" stroke-linecap="butt"><path d="M3.5 10.5 L8.5 16 L18.5 3.5"/></g></svg>
<span class="t" style="left:2671.51px;top:206.74px;font-size:29.6px;color:#ececec;letter-spacing:0.126px;-webkit-text-stroke:0.5px #ececec;">Live</span>
<div class="b " style="left:0px;top:0px;width:3px;height:1814px;background:linear-gradient(#c6c6c6 0,#c6c6c6 1390px,#e9e9e9 1400px,#e9e9e9 100%);"></div>
<div class="b " style="left:3px;top:0px;width:1px;height:1814px;background:#8f8f8f;"></div>
</div>
</body></html>
